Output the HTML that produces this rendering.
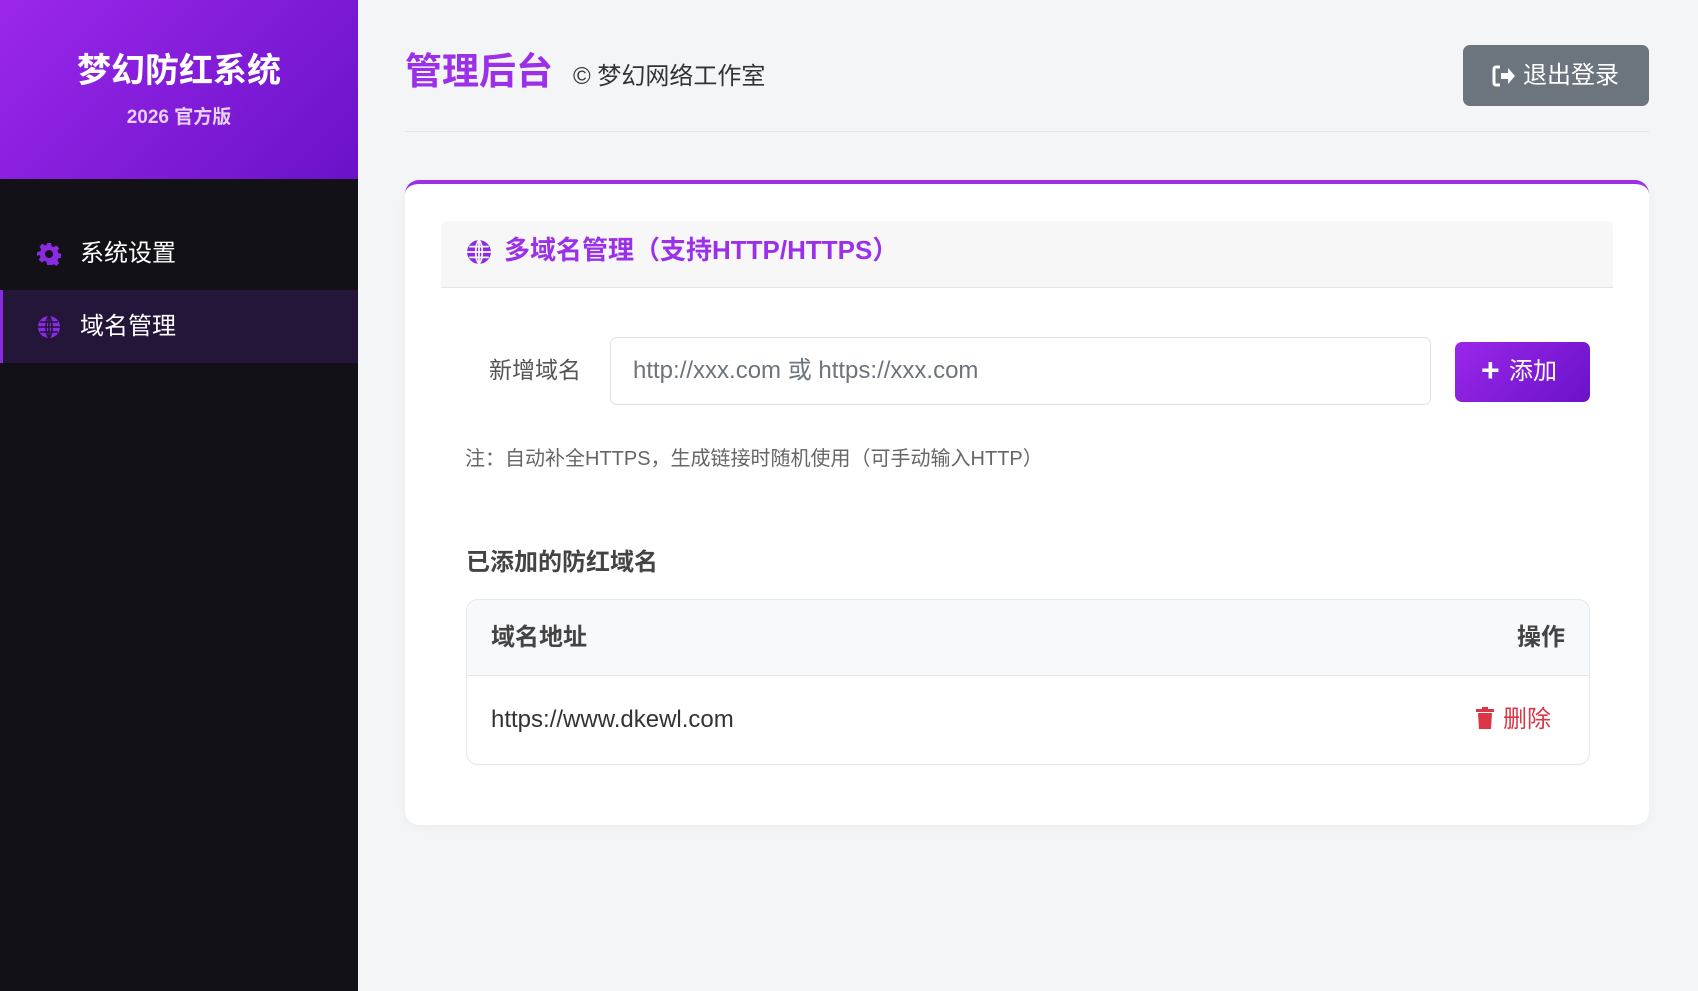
<!DOCTYPE html>
<html><head><meta charset="utf-8"><style>
*{box-sizing:border-box;margin:0;padding:0}
body{width:1698px;height:991px;background:#f4f5f7;font-family:"Liberation Sans","Noto Sans CJK SC",sans-serif;position:relative;overflow:hidden;color:#333}
.sb{position:absolute;left:0;top:0;width:358px;height:991px;background:#121118}
.sbh{height:179px;background:linear-gradient(135deg,#9b27ea,#6a12c9);text-align:center;color:#fff}
.sbh h1{position:absolute;top:43px;width:358px;font-size:34px;font-weight:700}
.sbh p{position:absolute;top:102px;width:358px;font-size:19px;font-weight:700;color:#e6d2fb}
.mi{position:absolute;left:0;width:358px;height:73px;color:#fff;font-size:24px;line-height:73px;padding-left:80px}
.mi svg{position:absolute;left:37px;top:25px}
.act{background:#231638;border-left:3px solid #8a2be2;padding-left:77px}
.abs{position:absolute}
</style></head><body>
<div class="sb">
<div class="sbh"><h1>梦幻防红系统</h1><p>2026 官方版</p></div>
<div class="mi" style="top:217px"><svg width="24" height="24" viewBox="0 0 24 24"><path fill="#8a2be2" d="M10 1h4l.6 3.2 2 1 2.8-1.7 2.8 2.8-1.7 2.8 1 2 3.2.6v4l-3.2.6-1 2 1.7 2.8-2.8 2.8-2.8-1.7-2 1L14 23h-4l-.6-3.2-2-1-2.8 1.7-2.8-2.8 1.7-2.8-1-2L0 14v-4l3.2-.6 1-2L2.5 4.6l2.8-2.8 2.8 1.7 2-1zM12 8a4 4 0 100 8 4 4 0 000-8z"/></svg>系统设置</div>
<div class="mi act" style="top:290px"><svg width="24" height="24" viewBox="0 0 24 24" style="left:34px"><circle cx="12" cy="12" r="11" fill="#8a2be2"/><path d="M1 12h22M12 1c-4 4-4 18 0 22M12 1c4 4 4 18 0 22M12 1v22M3 7h18M3 17h18" stroke="#231638" stroke-width="1.6" fill="none"/></svg>域名管理</div>
</div>
<div class="abs" style="left:405px;top:41px;font-size:37px;font-weight:700;color:#9b30e8">管理后台</div>
<div class="abs" style="left:573px;top:56px;font-size:24px;color:#333">© 梦幻网络工作室</div>
<div class="abs" style="left:1463px;top:45px;width:186px;height:61px;background:#6c757d;border-radius:7px;color:#fff;font-size:24px;line-height:61px;padding-left:60px"><svg class="abs" style="left:29px;top:20px" width="24" height="22" viewBox="0 0 24 22"><path d="M8 2H4a2 2 0 00-2 2v14a2 2 0 002 2h4" stroke="#fff" stroke-width="3" fill="none"/><path d="M9 8h7V3l7 8-7 8v-5H9z" fill="#fff"/></svg>退出登录</div>
<div class="abs" style="left:405px;top:131px;width:1244px;height:1px;background:#e2e5ea"></div>
<div class="abs" style="left:405px;top:180px;width:1244px;height:645px;background:#fff;border-radius:14px;border-top:4px solid #9b30e8;box-shadow:0 2px 10px rgba(0,0,0,.04)">
<div class="abs" style="left:36px;top:37px;width:1172px;height:67px;background:#f7f7f8;border-bottom:1px solid #e3e5e8;border-radius:6px 6px 0 0"></div>
<svg class="abs" style="left:61px;top:55px" width="26" height="26" viewBox="0 0 24 24"><circle cx="12" cy="12" r="11" fill="#8a2be2"/><path d="M1 12h22M12 1c-4 4-4 18 0 22M12 1c4 4 4 18 0 22M12 1v22M3 7h18M3 17h18" stroke="#f7f7f8" stroke-width="1.6" fill="none"/></svg>
<div class="abs" style="left:99px;top:46px;font-size:26px;font-weight:700;color:#9b30e8">多域名管理（支持HTTP/HTTPS）</div>
<div class="abs" style="left:84px;top:167px;font-size:23px;color:#555">新增域名</div>
<div class="abs" style="left:205px;top:153px;width:821px;height:68px;border:1px solid #dee2e6;border-radius:7px;font-size:24px;color:#6c757d;line-height:66px;padding-left:22px">http://xxx.com 或 https://xxx.com</div>
<div class="abs" style="left:1050px;top:158px;width:135px;height:60px;background:linear-gradient(135deg,#9b27ea,#6a12c9);border-radius:7px;color:#fff;font-size:24px;line-height:60px;padding-left:54px"><span class="abs" style="left:26px;top:-2px;font-size:32px;font-weight:700">+</span>添加</div>
<div class="abs" style="left:60px;top:258px;font-size:20px;color:#666">注：自动补全HTTPS，生成链接时随机使用（可手动输入HTTP）</div>
<div class="abs" style="left:61px;top:358px;font-size:24px;font-weight:700;color:#444">已添加的防红域名</div>
<div class="abs" style="left:61px;top:415px;width:1124px;height:166px;border:1px solid #e3e6ea;border-radius:12px;overflow:hidden">
<div style="height:76px;background:#f8f9fb;border-bottom:1px solid #e3e6ea;font-size:24px;font-weight:700;color:#444;line-height:76px;padding:0 24px"><span>域名地址</span><span style="float:right">操作</span></div>
<div style="font-size:24px;color:#333;line-height:88px;padding:0 24px">https://www.dkewl.com<span style="float:right;color:#dc3545;margin-right:14px"><svg width="20" height="24" viewBox="0 0 20 24" style="vertical-align:-3px;margin-right:8px"><path d="M1 3h18v3H1zM7 1h6v2H7zM3 7h14l-1 16H4z" fill="#dc3545"/></svg>删除</span></div>
</div>
</div>
</body></html>
